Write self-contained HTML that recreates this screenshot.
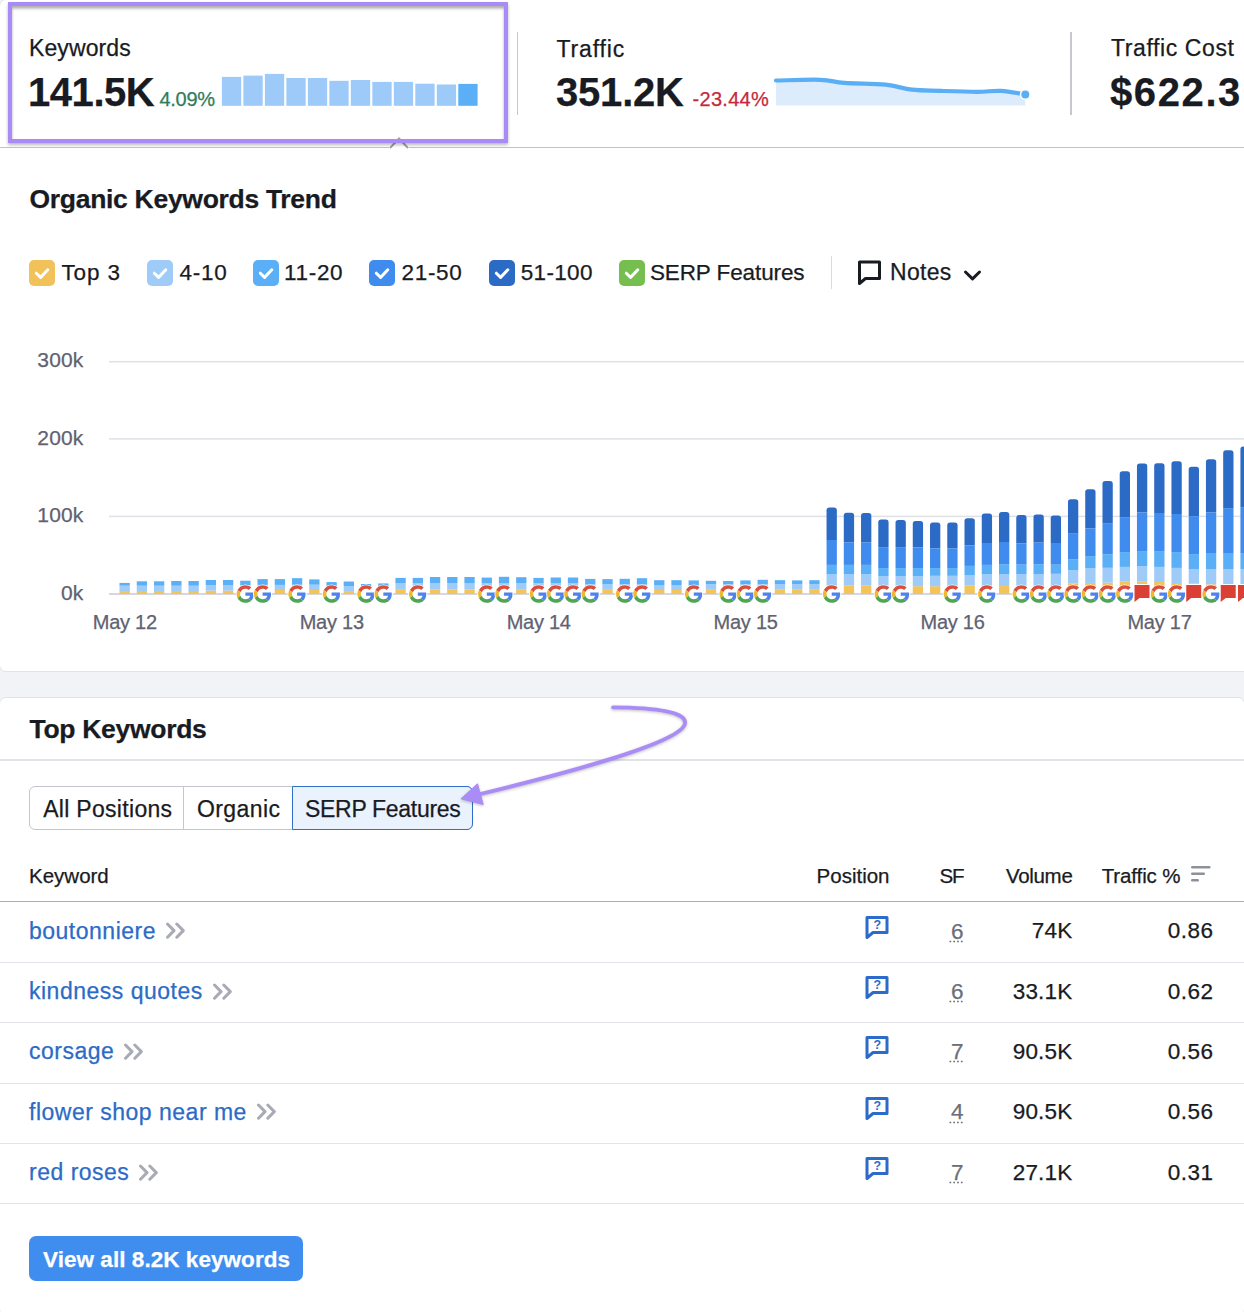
<!DOCTYPE html>
<html><head><meta charset="utf-8"><title>Organic Research</title>
<style>
html,body{margin:0;padding:0;background:#f2f3f7;width:1244px;height:1312px;overflow:hidden;position:relative;font-family:"Liberation Sans", sans-serif}
.t{position:absolute;white-space:nowrap;-webkit-text-stroke:0.25px currentColor}
.abs{position:absolute}
.frame{border:4px solid #a88bf6;box-shadow:0 2px 3px rgba(0,0,0,0.28), inset 0 2.5px 3px rgba(0,0,0,0.32)}
.cb{width:26px;height:26px;border-radius:5px}
.cb svg{display:block}
.band{left:0;top:671px;width:1244px;height:26px;background:#f2f3f7}
.card1{left:-1px;top:-1px;width:1300px;height:673px;box-sizing:border-box;border:1px solid #e2e3e9;border-radius:7px;background:#fff}
.card2{left:-1px;top:696.5px;width:1246px;height:619px;box-sizing:border-box;border:1px solid #e2e3e9;border-radius:7px;background:#fff}
.seg{box-sizing:border-box;border:1.3px solid #c4c6cf;border-radius:6px;background:#fff}
.btn{background:#3f8def;border-radius:7px}
</style></head><body>
<div class="abs card1"></div>
<div class="abs card2"></div>
<div class="kpi">
<div class="t" style="left:29px;top:37.25px;font-size:23px;line-height:23px;color:#191b23;font-weight:400;letter-spacing:0.1px;">Keywords</div>
<div class="t" style="left:28px;top:71.80px;font-size:40px;line-height:40px;color:#191b23;font-weight:700;letter-spacing:-0.45px;">141.5K</div>
<div class="t" style="left:159.5px;top:89.10px;font-size:20px;line-height:20px;color:#307d5b;font-weight:400;letter-spacing:-0.3px;">4.09%</div>
<svg class="abs" style="left:0;top:0" width="520" height="150"><rect x="221.90" y="76.9" width="19.3" height="28.90" fill="#9dcaf8"/><rect x="243.39" y="75.6" width="19.3" height="30.20" fill="#9dcaf8"/><rect x="264.88" y="73.9" width="19.3" height="31.90" fill="#9dcaf8"/><rect x="286.37" y="78" width="19.3" height="27.80" fill="#9dcaf8"/><rect x="307.86" y="78" width="19.3" height="27.80" fill="#9dcaf8"/><rect x="329.35" y="80.8" width="19.3" height="25.00" fill="#9dcaf8"/><rect x="350.84" y="80" width="19.3" height="25.80" fill="#9dcaf8"/><rect x="372.33" y="81.9" width="19.3" height="23.90" fill="#9dcaf8"/><rect x="393.82" y="81.9" width="19.3" height="23.90" fill="#9dcaf8"/><rect x="415.31" y="83.7" width="19.3" height="22.10" fill="#9dcaf8"/><rect x="436.80" y="84.5" width="19.3" height="21.30" fill="#9dcaf8"/><rect x="458.29" y="83.9" width="19.3" height="21.90" fill="#5aaff6"/></svg>
<div class="abs" style="left:516.5px;top:32px;width:1.5px;height:83px;background:#c6c8d1"></div>
<div class="t" style="left:556.5px;top:37.55px;font-size:23px;line-height:23px;color:#191b23;font-weight:400;letter-spacing:0.85px;">Traffic</div>
<div class="t" style="left:556px;top:71.80px;font-size:40px;line-height:40px;color:#191b23;font-weight:700;letter-spacing:-0.2px;">351.2K</div>
<div class="t" style="left:692.5px;top:89.00px;font-size:20px;line-height:20px;color:#c7283a;font-weight:400;letter-spacing:0.3px;">-23.44%</div>
<svg class="abs" style="left:0;top:0" width="1244" height="150"><path d="M776,80.5 C784.0,80.4 808.0,79.4 820.3,79.8 C832.6,80.2 832.7,82.0 844.4,82.9 C856.1,83.8 873.2,83.4 885.4,84.6 C897.5,85.8 901.9,88.6 911.9,89.7 C921.9,90.8 929.2,90.5 940.9,90.9 C952.6,91.3 966.2,91.8 977,91.8 C987.8,91.8 992.4,90.4 1001.1,90.9 C1009.8,91.4 1020.9,93.9 1025.3,94.5 L1025.3,105.6 L776,105.6 Z" fill="#dcecfc"/><path d="M776,80.5 C784.0,80.4 808.0,79.4 820.3,79.8 C832.6,80.2 832.7,82.0 844.4,82.9 C856.1,83.8 873.2,83.4 885.4,84.6 C897.5,85.8 901.9,88.6 911.9,89.7 C921.9,90.8 929.2,90.5 940.9,90.9 C952.6,91.3 966.2,91.8 977,91.8 C987.8,91.8 992.4,90.4 1001.1,90.9 C1009.8,91.4 1020.9,93.9 1025.3,94.5" fill="none" stroke="#5aaef6" stroke-width="4.2" stroke-linejoin="round" stroke-linecap="round"/><circle cx="1025.3" cy="94.5" r="5.5" fill="#fff"/><circle cx="1025.3" cy="94.5" r="4" fill="#5aaef6"/></svg>
<div class="abs" style="left:1070px;top:32px;width:1.5px;height:83px;background:#c6c8d1"></div>
<div class="t" style="left:1111px;top:37.05px;font-size:23px;line-height:23px;color:#191b23;font-weight:400;letter-spacing:0.6px;">Traffic Cost</div>
<div class="t" style="left:1110px;top:71.80px;font-size:40px;line-height:40px;color:#191b23;font-weight:700;letter-spacing:1.6px;">$622.3</div>
<div class="abs" style="left:0;top:146.8px;width:389px;height:1.3px;background:#c0c2cc"></div>
<div class="abs" style="left:409px;top:146.8px;width:835px;height:1.3px;background:#c0c2cc"></div>
<svg class="abs" style="left:385px;top:132px" width="30" height="20"><path d="M5,16 L14,6.5 L23,16" fill="#fff" stroke="#9fa1ab" stroke-width="1.9"/></svg>
<div class="abs frame" style="left:8px;top:2px;width:492px;height:133px;"></div>
</div>
<div class="t" style="left:29.5px;top:186.28px;font-size:26.5px;line-height:26.5px;color:#191b23;font-weight:700;letter-spacing:-0.3px;">Organic Keywords Trend</div>
<div class="abs cb" style="left:29px;top:260px;background:#f2c25a"><svg width="26" height="26"><path d="M7.3,13.2 L11.6,17.4 L18.8,9.8" fill="none" stroke="#fff" stroke-width="3" stroke-linecap="round" stroke-linejoin="round"/></svg></div>
<div class="t" style="left:61.5px;top:261.98px;font-size:22.5px;line-height:22.5px;color:#191b23;font-weight:400;letter-spacing:0.85px;">Top 3</div>
<div class="abs cb" style="left:147px;top:260px;background:#9ecbf8"><svg width="26" height="26"><path d="M7.3,13.2 L11.6,17.4 L18.8,9.8" fill="none" stroke="#fff" stroke-width="3" stroke-linecap="round" stroke-linejoin="round"/></svg></div>
<div class="t" style="left:179.5px;top:261.98px;font-size:22.5px;line-height:22.5px;color:#191b23;font-weight:400;letter-spacing:0.77px;">4-10</div>
<div class="abs cb" style="left:253px;top:260px;background:#5aaff6"><svg width="26" height="26"><path d="M7.3,13.2 L11.6,17.4 L18.8,9.8" fill="none" stroke="#fff" stroke-width="3" stroke-linecap="round" stroke-linejoin="round"/></svg></div>
<div class="t" style="left:284.1px;top:261.98px;font-size:22.5px;line-height:22.5px;color:#191b23;font-weight:400;letter-spacing:0.66px;">11-20</div>
<div class="abs cb" style="left:369px;top:260px;background:#3f8cee"><svg width="26" height="26"><path d="M7.3,13.2 L11.6,17.4 L18.8,9.8" fill="none" stroke="#fff" stroke-width="3" stroke-linecap="round" stroke-linejoin="round"/></svg></div>
<div class="t" style="left:401.5px;top:261.98px;font-size:22.5px;line-height:22.5px;color:#191b23;font-weight:400;letter-spacing:0.68px;">21-50</div>
<div class="abs cb" style="left:489px;top:260px;background:#2c6bc5"><svg width="26" height="26"><path d="M7.3,13.2 L11.6,17.4 L18.8,9.8" fill="none" stroke="#fff" stroke-width="3" stroke-linecap="round" stroke-linejoin="round"/></svg></div>
<div class="t" style="left:520.7px;top:261.98px;font-size:22.5px;line-height:22.5px;color:#191b23;font-weight:400;letter-spacing:0.35px;">51-100</div>
<div class="abs cb" style="left:619px;top:260px;background:#76be4f"><svg width="26" height="26"><path d="M7.3,13.2 L11.6,17.4 L18.8,9.8" fill="none" stroke="#fff" stroke-width="3" stroke-linecap="round" stroke-linejoin="round"/></svg></div>
<div class="t" style="left:649.9px;top:261.98px;font-size:22.5px;line-height:22.5px;color:#191b23;font-weight:400;letter-spacing:-0.1px;">SERP Features</div>
<div class="abs" style="left:831px;top:256px;width:1.3px;height:33px;background:#d9dae2"></div>
<svg class="abs" style="left:855px;top:258px" width="30" height="30"><path d="M4.5,4 H24.5 V20.5 H10.5 L4.5,25.5 Z" fill="none" stroke="#191b23" stroke-width="3" stroke-linejoin="round"/></svg>
<div class="t" style="left:890px;top:260.85px;font-size:23px;line-height:23px;color:#191b23;font-weight:400;letter-spacing:0.3px;">Notes</div>
<svg class="abs" style="left:960.5px;top:265.6px" width="24" height="20"><path d="M4.5,6 L11.5,12.8 L18.5,6" fill="none" stroke="#191b23" stroke-width="3" stroke-linecap="round" stroke-linejoin="round"/></svg>
<svg class="abs" style="left:0;top:0" width="1244" height="680"><defs><clipPath id="cc"><rect x="0" y="0" width="1244" height="680"/></clipPath></defs><rect x="109" y="360.95" width="1135" height="1.5" fill="#e0e1e7"/><rect x="109" y="438.15" width="1135" height="1.5" fill="#e0e1e7"/><rect x="109" y="515.65" width="1135" height="1.5" fill="#e0e1e7"/><rect x="109" y="593" width="1135" height="2" fill="#d7d8df"/><rect x="119.50" y="591.00" width="10.3" height="3.00" fill="#f2c45a"/><rect x="119.50" y="585.70" width="10.3" height="5.30" fill="#9ecbf8"/><rect x="119.50" y="582.90" width="10.3" height="2.80" fill="#5aaff6"/><rect x="136.75" y="591.00" width="10.3" height="3.00" fill="#f2c45a"/><rect x="136.75" y="585.70" width="10.3" height="5.30" fill="#9ecbf8"/><rect x="136.75" y="581.30" width="10.3" height="4.40" fill="#5aaff6"/><rect x="153.99" y="591.00" width="10.3" height="3.00" fill="#f2c45a"/><rect x="153.99" y="585.70" width="10.3" height="5.30" fill="#9ecbf8"/><rect x="153.99" y="581.30" width="10.3" height="4.40" fill="#5aaff6"/><rect x="171.24" y="591.00" width="10.3" height="3.00" fill="#f2c45a"/><rect x="171.24" y="585.70" width="10.3" height="5.30" fill="#9ecbf8"/><rect x="171.24" y="581.00" width="10.3" height="4.70" fill="#5aaff6"/><rect x="188.48" y="591.00" width="10.3" height="3.00" fill="#f2c45a"/><rect x="188.48" y="585.70" width="10.3" height="5.30" fill="#9ecbf8"/><rect x="188.48" y="581.00" width="10.3" height="4.70" fill="#5aaff6"/><rect x="205.73" y="590.60" width="10.3" height="3.40" fill="#f2c45a"/><rect x="205.73" y="585.20" width="10.3" height="5.40" fill="#9ecbf8"/><rect x="205.73" y="580.00" width="10.3" height="5.20" fill="#5aaff6"/><rect x="222.97" y="590.60" width="10.3" height="3.40" fill="#f2c45a"/><rect x="222.97" y="585.20" width="10.3" height="5.40" fill="#9ecbf8"/><rect x="222.97" y="580.00" width="10.3" height="5.20" fill="#5aaff6"/><rect x="240.22" y="590.60" width="10.3" height="3.40" fill="#f2c45a"/><rect x="240.22" y="585.20" width="10.3" height="5.40" fill="#9ecbf8"/><rect x="240.22" y="580.70" width="10.3" height="4.50" fill="#5aaff6"/><rect x="257.46" y="590.00" width="10.3" height="4.00" fill="#f2c45a"/><rect x="257.46" y="584.90" width="10.3" height="5.10" fill="#9ecbf8"/><rect x="257.46" y="579.10" width="10.3" height="5.80" fill="#5aaff6"/><rect x="274.71" y="590.00" width="10.3" height="4.00" fill="#f2c45a"/><rect x="274.71" y="584.90" width="10.3" height="5.10" fill="#9ecbf8"/><rect x="274.71" y="579.10" width="10.3" height="5.80" fill="#5aaff6"/><rect x="291.95" y="590.00" width="10.3" height="4.00" fill="#f2c45a"/><rect x="291.95" y="584.70" width="10.3" height="5.30" fill="#9ecbf8"/><rect x="291.95" y="578.20" width="10.3" height="6.50" fill="#5aaff6"/><rect x="309.20" y="590.00" width="10.3" height="4.00" fill="#f2c45a"/><rect x="309.20" y="584.70" width="10.3" height="5.30" fill="#9ecbf8"/><rect x="309.20" y="579.40" width="10.3" height="5.30" fill="#5aaff6"/><rect x="326.44" y="591.10" width="10.3" height="2.90" fill="#f2c45a"/><rect x="326.44" y="586.00" width="10.3" height="5.10" fill="#9ecbf8"/><rect x="326.44" y="582.10" width="10.3" height="3.90" fill="#5aaff6"/><rect x="343.69" y="591.10" width="10.3" height="2.90" fill="#f2c45a"/><rect x="343.69" y="586.00" width="10.3" height="5.10" fill="#9ecbf8"/><rect x="343.69" y="581.50" width="10.3" height="4.50" fill="#5aaff6"/><rect x="360.93" y="591.10" width="10.3" height="2.90" fill="#f2c45a"/><rect x="360.93" y="586.50" width="10.3" height="4.60" fill="#9ecbf8"/><rect x="360.93" y="584.00" width="10.3" height="2.50" fill="#5aaff6"/><rect x="378.18" y="591.10" width="10.3" height="2.90" fill="#f2c45a"/><rect x="378.18" y="586.50" width="10.3" height="4.60" fill="#9ecbf8"/><rect x="378.18" y="583.40" width="10.3" height="3.10" fill="#5aaff6"/><rect x="395.42" y="589.80" width="10.3" height="4.20" fill="#f2c45a"/><rect x="395.42" y="583.00" width="10.3" height="6.80" fill="#9ecbf8"/><rect x="395.42" y="577.90" width="10.3" height="5.10" fill="#5aaff6"/><rect x="412.67" y="589.80" width="10.3" height="4.20" fill="#f2c45a"/><rect x="412.67" y="583.00" width="10.3" height="6.80" fill="#9ecbf8"/><rect x="412.67" y="577.90" width="10.3" height="5.10" fill="#5aaff6"/><rect x="429.91" y="589.40" width="10.3" height="4.60" fill="#f2c45a"/><rect x="429.91" y="583.00" width="10.3" height="6.40" fill="#9ecbf8"/><rect x="429.91" y="577.00" width="10.3" height="6.00" fill="#5aaff6"/><rect x="447.16" y="589.40" width="10.3" height="4.60" fill="#f2c45a"/><rect x="447.16" y="583.00" width="10.3" height="6.40" fill="#9ecbf8"/><rect x="447.16" y="577.00" width="10.3" height="6.00" fill="#5aaff6"/><rect x="464.40" y="589.40" width="10.3" height="4.60" fill="#f2c45a"/><rect x="464.40" y="583.00" width="10.3" height="6.40" fill="#9ecbf8"/><rect x="464.40" y="577.00" width="10.3" height="6.00" fill="#5aaff6"/><rect x="481.65" y="589.40" width="10.3" height="4.60" fill="#f2c45a"/><rect x="481.65" y="583.00" width="10.3" height="6.40" fill="#9ecbf8"/><rect x="481.65" y="577.60" width="10.3" height="5.40" fill="#5aaff6"/><rect x="498.89" y="589.40" width="10.3" height="4.60" fill="#f2c45a"/><rect x="498.89" y="583.00" width="10.3" height="6.40" fill="#9ecbf8"/><rect x="498.89" y="576.80" width="10.3" height="6.20" fill="#5aaff6"/><rect x="516.13" y="589.20" width="10.3" height="4.80" fill="#f2c45a"/><rect x="516.13" y="583.00" width="10.3" height="6.20" fill="#9ecbf8"/><rect x="516.13" y="577.20" width="10.3" height="5.80" fill="#5aaff6"/><rect x="533.38" y="589.40" width="10.3" height="4.60" fill="#f2c45a"/><rect x="533.38" y="583.00" width="10.3" height="6.40" fill="#9ecbf8"/><rect x="533.38" y="577.90" width="10.3" height="5.10" fill="#5aaff6"/><rect x="550.62" y="589.40" width="10.3" height="4.60" fill="#f2c45a"/><rect x="550.62" y="583.00" width="10.3" height="6.40" fill="#9ecbf8"/><rect x="550.62" y="577.50" width="10.3" height="5.50" fill="#5aaff6"/><rect x="567.87" y="589.40" width="10.3" height="4.60" fill="#f2c45a"/><rect x="567.87" y="583.00" width="10.3" height="6.40" fill="#9ecbf8"/><rect x="567.87" y="577.50" width="10.3" height="5.50" fill="#5aaff6"/><rect x="585.12" y="589.80" width="10.3" height="4.20" fill="#f2c45a"/><rect x="585.12" y="584.30" width="10.3" height="5.50" fill="#9ecbf8"/><rect x="585.12" y="578.90" width="10.3" height="5.40" fill="#5aaff6"/><rect x="602.36" y="589.80" width="10.3" height="4.20" fill="#f2c45a"/><rect x="602.36" y="584.30" width="10.3" height="5.50" fill="#9ecbf8"/><rect x="602.36" y="579.10" width="10.3" height="5.20" fill="#5aaff6"/><rect x="619.61" y="589.80" width="10.3" height="4.20" fill="#f2c45a"/><rect x="619.61" y="584.30" width="10.3" height="5.50" fill="#9ecbf8"/><rect x="619.61" y="578.80" width="10.3" height="5.50" fill="#5aaff6"/><rect x="636.85" y="589.80" width="10.3" height="4.20" fill="#f2c45a"/><rect x="636.85" y="584.30" width="10.3" height="5.50" fill="#9ecbf8"/><rect x="636.85" y="578.20" width="10.3" height="6.10" fill="#5aaff6"/><rect x="654.10" y="590.00" width="10.3" height="4.00" fill="#f2c45a"/><rect x="654.10" y="585.00" width="10.3" height="5.00" fill="#9ecbf8"/><rect x="654.10" y="580.20" width="10.3" height="4.80" fill="#5aaff6"/><rect x="671.34" y="590.00" width="10.3" height="4.00" fill="#f2c45a"/><rect x="671.34" y="585.00" width="10.3" height="5.00" fill="#9ecbf8"/><rect x="671.34" y="580.20" width="10.3" height="4.80" fill="#5aaff6"/><rect x="688.59" y="590.00" width="10.3" height="4.00" fill="#f2c45a"/><rect x="688.59" y="585.00" width="10.3" height="5.00" fill="#9ecbf8"/><rect x="688.59" y="580.40" width="10.3" height="4.60" fill="#5aaff6"/><rect x="705.83" y="589.80" width="10.3" height="4.20" fill="#f2c45a"/><rect x="705.83" y="584.30" width="10.3" height="5.50" fill="#9ecbf8"/><rect x="705.83" y="580.80" width="10.3" height="3.50" fill="#5aaff6"/><rect x="723.08" y="589.80" width="10.3" height="4.20" fill="#f2c45a"/><rect x="723.08" y="584.30" width="10.3" height="5.50" fill="#9ecbf8"/><rect x="723.08" y="581.00" width="10.3" height="3.30" fill="#5aaff6"/><rect x="740.32" y="589.80" width="10.3" height="4.20" fill="#f2c45a"/><rect x="740.32" y="584.30" width="10.3" height="5.50" fill="#9ecbf8"/><rect x="740.32" y="580.40" width="10.3" height="3.90" fill="#5aaff6"/><rect x="757.57" y="589.20" width="10.3" height="4.80" fill="#f2c45a"/><rect x="757.57" y="584.00" width="10.3" height="5.20" fill="#9ecbf8"/><rect x="757.57" y="579.80" width="10.3" height="4.20" fill="#5aaff6"/><rect x="774.81" y="589.20" width="10.3" height="4.80" fill="#f2c45a"/><rect x="774.81" y="584.00" width="10.3" height="5.20" fill="#9ecbf8"/><rect x="774.81" y="580.20" width="10.3" height="3.80" fill="#5aaff6"/><rect x="792.06" y="589.20" width="10.3" height="4.80" fill="#f2c45a"/><rect x="792.06" y="584.00" width="10.3" height="5.20" fill="#9ecbf8"/><rect x="792.06" y="580.40" width="10.3" height="3.60" fill="#5aaff6"/><rect x="809.30" y="589.20" width="10.3" height="4.80" fill="#f2c45a"/><rect x="809.30" y="584.00" width="10.3" height="5.20" fill="#9ecbf8"/><rect x="809.30" y="580.20" width="10.3" height="3.80" fill="#5aaff6"/><rect x="826.55" y="585.20" width="10.3" height="8.80" fill="#f2c45a"/><rect x="826.55" y="574.10" width="10.3" height="11.10" fill="#9ecbf8"/><rect x="826.55" y="564.90" width="10.3" height="9.20" fill="#5aaff6"/><rect x="826.55" y="540.00" width="10.3" height="24.90" fill="#3f8cee"/><path d="M826.55,540.00 V510.30 A2.8,2.8 0 0 1 829.35,507.50 H834.05 A2.8,2.8 0 0 1 836.85,510.30 V540.00 Z" fill="#2c6bc5"/><rect x="843.79" y="585.40" width="10.3" height="8.60" fill="#f2c45a"/><rect x="843.79" y="574.30" width="10.3" height="11.10" fill="#9ecbf8"/><rect x="843.79" y="564.90" width="10.3" height="9.40" fill="#5aaff6"/><rect x="843.79" y="542.30" width="10.3" height="22.60" fill="#3f8cee"/><path d="M843.79,542.30 V515.50 A2.8,2.8 0 0 1 846.59,512.70 H851.29 A2.8,2.8 0 0 1 854.09,515.50 V542.30 Z" fill="#2c6bc5"/><rect x="861.04" y="585.40" width="10.3" height="8.60" fill="#f2c45a"/><rect x="861.04" y="574.30" width="10.3" height="11.10" fill="#9ecbf8"/><rect x="861.04" y="564.90" width="10.3" height="9.40" fill="#5aaff6"/><rect x="861.04" y="542.30" width="10.3" height="22.60" fill="#3f8cee"/><path d="M861.04,542.30 V515.80 A2.8,2.8 0 0 1 863.84,513.00 H868.54 A2.8,2.8 0 0 1 871.34,515.80 V542.30 Z" fill="#2c6bc5"/><rect x="878.28" y="585.70" width="10.3" height="8.30" fill="#f2c45a"/><rect x="878.28" y="576.00" width="10.3" height="9.70" fill="#9ecbf8"/><rect x="878.28" y="568.10" width="10.3" height="7.90" fill="#5aaff6"/><rect x="878.28" y="547.10" width="10.3" height="21.00" fill="#3f8cee"/><path d="M878.28,547.10 V522.40 A2.8,2.8 0 0 1 881.08,519.60 H885.78 A2.8,2.8 0 0 1 888.58,522.40 V547.10 Z" fill="#2c6bc5"/><rect x="895.53" y="585.70" width="10.3" height="8.30" fill="#f2c45a"/><rect x="895.53" y="576.00" width="10.3" height="9.70" fill="#9ecbf8"/><rect x="895.53" y="568.10" width="10.3" height="7.90" fill="#5aaff6"/><rect x="895.53" y="547.10" width="10.3" height="21.00" fill="#3f8cee"/><path d="M895.53,547.10 V522.70 A2.8,2.8 0 0 1 898.33,519.90 H903.03 A2.8,2.8 0 0 1 905.83,522.70 V547.10 Z" fill="#2c6bc5"/><rect x="912.77" y="586.20" width="10.3" height="7.80" fill="#f2c45a"/><rect x="912.77" y="576.00" width="10.3" height="10.20" fill="#9ecbf8"/><rect x="912.77" y="568.10" width="10.3" height="7.90" fill="#5aaff6"/><rect x="912.77" y="547.60" width="10.3" height="20.50" fill="#3f8cee"/><path d="M912.77,547.60 V523.80 A2.8,2.8 0 0 1 915.57,521.00 H920.27 A2.8,2.8 0 0 1 923.07,523.80 V547.60 Z" fill="#2c6bc5"/><rect x="930.02" y="586.20" width="10.3" height="7.80" fill="#f2c45a"/><rect x="930.02" y="575.80" width="10.3" height="10.40" fill="#9ecbf8"/><rect x="930.02" y="568.10" width="10.3" height="7.70" fill="#5aaff6"/><rect x="930.02" y="548.30" width="10.3" height="19.80" fill="#3f8cee"/><path d="M930.02,548.30 V525.30 A2.8,2.8 0 0 1 932.82,522.50 H937.52 A2.8,2.8 0 0 1 940.32,525.30 V548.30 Z" fill="#2c6bc5"/><rect x="947.26" y="586.20" width="10.3" height="7.80" fill="#f2c45a"/><rect x="947.26" y="575.80" width="10.3" height="10.40" fill="#9ecbf8"/><rect x="947.26" y="568.10" width="10.3" height="7.70" fill="#5aaff6"/><rect x="947.26" y="548.30" width="10.3" height="19.80" fill="#3f8cee"/><path d="M947.26,548.30 V525.30 A2.8,2.8 0 0 1 950.06,522.50 H954.76 A2.8,2.8 0 0 1 957.56,525.30 V548.30 Z" fill="#2c6bc5"/><rect x="964.50" y="585.50" width="10.3" height="8.50" fill="#f2c45a"/><rect x="964.50" y="575.00" width="10.3" height="10.50" fill="#9ecbf8"/><rect x="964.50" y="565.90" width="10.3" height="9.10" fill="#5aaff6"/><rect x="964.50" y="545.30" width="10.3" height="20.60" fill="#3f8cee"/><path d="M964.50,545.30 V521.10 A2.8,2.8 0 0 1 967.30,518.30 H972.00 A2.8,2.8 0 0 1 974.80,521.10 V545.30 Z" fill="#2c6bc5"/><rect x="981.75" y="585.20" width="10.3" height="8.80" fill="#f2c45a"/><rect x="981.75" y="574.00" width="10.3" height="11.20" fill="#9ecbf8"/><rect x="981.75" y="564.90" width="10.3" height="9.10" fill="#5aaff6"/><rect x="981.75" y="543.00" width="10.3" height="21.90" fill="#3f8cee"/><path d="M981.75,543.00 V516.40 A2.8,2.8 0 0 1 984.55,513.60 H989.25 A2.8,2.8 0 0 1 992.05,516.40 V543.00 Z" fill="#2c6bc5"/><rect x="999.00" y="585.00" width="10.3" height="9.00" fill="#f2c45a"/><rect x="999.00" y="574.00" width="10.3" height="11.00" fill="#9ecbf8"/><rect x="999.00" y="564.20" width="10.3" height="9.80" fill="#5aaff6"/><rect x="999.00" y="542.00" width="10.3" height="22.20" fill="#3f8cee"/><path d="M999.00,542.00 V514.90 A2.8,2.8 0 0 1 1001.79,512.10 H1006.50 A2.8,2.8 0 0 1 1009.29,514.90 V542.00 Z" fill="#2c6bc5"/><rect x="1016.24" y="585.00" width="10.3" height="9.00" fill="#f2c45a"/><rect x="1016.24" y="574.00" width="10.3" height="11.00" fill="#9ecbf8"/><rect x="1016.24" y="564.60" width="10.3" height="9.40" fill="#5aaff6"/><rect x="1016.24" y="543.30" width="10.3" height="21.30" fill="#3f8cee"/><path d="M1016.24,543.30 V517.90 A2.8,2.8 0 0 1 1019.04,515.10 H1023.74 A2.8,2.8 0 0 1 1026.54,517.90 V543.30 Z" fill="#2c6bc5"/><rect x="1033.49" y="585.00" width="10.3" height="9.00" fill="#f2c45a"/><rect x="1033.49" y="574.00" width="10.3" height="11.00" fill="#9ecbf8"/><rect x="1033.49" y="564.20" width="10.3" height="9.80" fill="#5aaff6"/><rect x="1033.49" y="542.50" width="10.3" height="21.70" fill="#3f8cee"/><path d="M1033.49,542.50 V517.40 A2.8,2.8 0 0 1 1036.29,514.60 H1040.99 A2.8,2.8 0 0 1 1043.79,517.40 V542.50 Z" fill="#2c6bc5"/><rect x="1050.73" y="585.00" width="10.3" height="9.00" fill="#f2c45a"/><rect x="1050.73" y="573.80" width="10.3" height="11.20" fill="#9ecbf8"/><rect x="1050.73" y="564.70" width="10.3" height="9.10" fill="#5aaff6"/><rect x="1050.73" y="542.90" width="10.3" height="21.80" fill="#3f8cee"/><path d="M1050.73,542.90 V518.20 A2.8,2.8 0 0 1 1053.53,515.40 H1058.23 A2.8,2.8 0 0 1 1061.03,518.20 V542.90 Z" fill="#2c6bc5"/><rect x="1067.97" y="583.60" width="10.3" height="10.40" fill="#f2c45a"/><rect x="1067.97" y="570.30" width="10.3" height="13.30" fill="#9ecbf8"/><rect x="1067.97" y="559.20" width="10.3" height="11.10" fill="#5aaff6"/><rect x="1067.97" y="533.20" width="10.3" height="26.00" fill="#3f8cee"/><path d="M1067.97,533.20 V502.00 A2.8,2.8 0 0 1 1070.77,499.20 H1075.47 A2.8,2.8 0 0 1 1078.27,502.00 V533.20 Z" fill="#2c6bc5"/><rect x="1085.22" y="582.90" width="10.3" height="11.10" fill="#f2c45a"/><rect x="1085.22" y="568.10" width="10.3" height="14.80" fill="#9ecbf8"/><rect x="1085.22" y="556.10" width="10.3" height="12.00" fill="#5aaff6"/><rect x="1085.22" y="528.30" width="10.3" height="27.80" fill="#3f8cee"/><path d="M1085.22,528.30 V492.00 A2.8,2.8 0 0 1 1088.02,489.20 H1092.72 A2.8,2.8 0 0 1 1095.52,492.00 V528.30 Z" fill="#2c6bc5"/><rect x="1102.47" y="582.60" width="10.3" height="11.40" fill="#f2c45a"/><rect x="1102.47" y="567.80" width="10.3" height="14.80" fill="#9ecbf8"/><rect x="1102.47" y="554.30" width="10.3" height="13.50" fill="#5aaff6"/><rect x="1102.47" y="523.20" width="10.3" height="31.10" fill="#3f8cee"/><path d="M1102.47,523.20 V483.90 A2.8,2.8 0 0 1 1105.27,481.10 H1109.97 A2.8,2.8 0 0 1 1112.77,483.90 V523.20 Z" fill="#2c6bc5"/><rect x="1119.71" y="581.70" width="10.3" height="12.30" fill="#f2c45a"/><rect x="1119.71" y="566.90" width="10.3" height="14.80" fill="#9ecbf8"/><rect x="1119.71" y="552.10" width="10.3" height="14.80" fill="#5aaff6"/><rect x="1119.71" y="517.20" width="10.3" height="34.90" fill="#3f8cee"/><path d="M1119.71,517.20 V474.00 A2.8,2.8 0 0 1 1122.51,471.20 H1127.21 A2.8,2.8 0 0 1 1130.01,474.00 V517.20 Z" fill="#2c6bc5"/><rect x="1136.95" y="581.50" width="10.3" height="12.50" fill="#f2c45a"/><rect x="1136.95" y="566.30" width="10.3" height="15.20" fill="#9ecbf8"/><rect x="1136.95" y="551.10" width="10.3" height="15.20" fill="#5aaff6"/><rect x="1136.95" y="512.30" width="10.3" height="38.80" fill="#3f8cee"/><path d="M1136.95,512.30 V466.20 A2.8,2.8 0 0 1 1139.75,463.40 H1144.45 A2.8,2.8 0 0 1 1147.25,466.20 V512.30 Z" fill="#2c6bc5"/><rect x="1154.20" y="582.00" width="10.3" height="12.00" fill="#f2c45a"/><rect x="1154.20" y="566.90" width="10.3" height="15.10" fill="#9ecbf8"/><rect x="1154.20" y="551.10" width="10.3" height="15.80" fill="#5aaff6"/><rect x="1154.20" y="513.00" width="10.3" height="38.10" fill="#3f8cee"/><path d="M1154.20,513.00 V466.10 A2.8,2.8 0 0 1 1157.00,463.30 H1161.70 A2.8,2.8 0 0 1 1164.50,466.10 V513.00 Z" fill="#2c6bc5"/><rect x="1171.45" y="583.00" width="10.3" height="11.00" fill="#f2c45a"/><rect x="1171.45" y="567.90" width="10.3" height="15.10" fill="#9ecbf8"/><rect x="1171.45" y="552.10" width="10.3" height="15.80" fill="#5aaff6"/><rect x="1171.45" y="514.00" width="10.3" height="38.10" fill="#3f8cee"/><path d="M1171.45,514.00 V464.10 A2.8,2.8 0 0 1 1174.25,461.30 H1178.95 A2.8,2.8 0 0 1 1181.75,464.10 V514.00 Z" fill="#2c6bc5"/><rect x="1188.69" y="583.60" width="10.3" height="10.40" fill="#f2c45a"/><rect x="1188.69" y="569.00" width="10.3" height="14.60" fill="#9ecbf8"/><rect x="1188.69" y="554.10" width="10.3" height="14.90" fill="#5aaff6"/><rect x="1188.69" y="516.10" width="10.3" height="38.00" fill="#3f8cee"/><path d="M1188.69,516.10 V469.60 A2.8,2.8 0 0 1 1191.49,466.80 H1196.19 A2.8,2.8 0 0 1 1198.99,469.60 V516.10 Z" fill="#2c6bc5"/><rect x="1205.94" y="584.30" width="10.3" height="9.70" fill="#f2c45a"/><rect x="1205.94" y="569.00" width="10.3" height="15.30" fill="#9ecbf8"/><rect x="1205.94" y="553.00" width="10.3" height="16.00" fill="#5aaff6"/><rect x="1205.94" y="512.30" width="10.3" height="40.70" fill="#3f8cee"/><path d="M1205.94,512.30 V462.00 A2.8,2.8 0 0 1 1208.74,459.20 H1213.44 A2.8,2.8 0 0 1 1216.24,462.00 V512.30 Z" fill="#2c6bc5"/><rect x="1223.18" y="584.30" width="10.3" height="9.70" fill="#f2c45a"/><rect x="1223.18" y="569.00" width="10.3" height="15.30" fill="#9ecbf8"/><rect x="1223.18" y="553.00" width="10.3" height="16.00" fill="#5aaff6"/><rect x="1223.18" y="508.20" width="10.3" height="44.80" fill="#3f8cee"/><path d="M1223.18,508.20 V453.00 A2.8,2.8 0 0 1 1225.98,450.20 H1230.68 A2.8,2.8 0 0 1 1233.48,453.00 V508.20 Z" fill="#2c6bc5"/><rect x="1240.42" y="584.30" width="10.3" height="9.70" fill="#f2c45a"/><rect x="1240.42" y="569.00" width="10.3" height="15.30" fill="#9ecbf8"/><rect x="1240.42" y="553.00" width="10.3" height="16.00" fill="#5aaff6"/><rect x="1240.42" y="507.20" width="10.3" height="45.80" fill="#3f8cee"/><path d="M1240.42,507.20 V449.30 A2.8,2.8 0 0 1 1243.22,446.50 H1247.92 A2.8,2.8 0 0 1 1250.72,449.30 V507.20 Z" fill="#2c6bc5"/><circle cx="245.37" cy="594" r="9.6" fill="#fff"/><g transform="translate(236.56,585.2) scale(0.367)"><path fill="#d94f3d" d="M24 9.5c3.54 0 6.71 1.22 9.21 3.6l6.85-6.85C35.9 2.38 30.47 0 24 0 14.62 0 6.51 5.38 2.56 13.22l7.98 6.19C12.43 13.72 17.74 9.5 24 9.5z"/><path fill="#4e82ec" d="M46.98 24.55c0-1.57-.15-3.09-.38-4.55H24v9.02h12.94c-.58 2.960-2.26 5.480-4.780 7.180l7.73 6c4.510-4.180 7.090-10.360 7.090-17.650z"/><path fill="#f1b82d" d="M10.53 28.59c-.48-1.45-.76-2.99-.76-4.59s.27-3.14.76-4.59l-7.98-6.19C.92 16.46 0 20.120 0 24c0 3.880.92 7.540 2.560 10.780l7.970-6.190z"/><path fill="#4fa553" d="M24 48c6.48 0 11.93-2.13 15.89-5.81l-7.73-6c-2.15 1.45-4.92 2.3-8.16 2.3-6.26 0-11.57-4.22-13.47-9.91l-7.98 6.19C6.51 42.62 14.62 48 24 48z"/></g><circle cx="262.61" cy="594" r="9.6" fill="#fff"/><g transform="translate(253.81,585.2) scale(0.367)"><path fill="#d94f3d" d="M24 9.5c3.54 0 6.71 1.22 9.21 3.6l6.85-6.85C35.9 2.38 30.47 0 24 0 14.62 0 6.51 5.38 2.56 13.22l7.98 6.19C12.43 13.72 17.74 9.5 24 9.5z"/><path fill="#4e82ec" d="M46.98 24.55c0-1.57-.15-3.09-.38-4.55H24v9.02h12.94c-.58 2.960-2.26 5.480-4.780 7.180l7.73 6c4.510-4.180 7.090-10.360 7.090-17.650z"/><path fill="#f1b82d" d="M10.53 28.59c-.48-1.45-.76-2.99-.76-4.59s.27-3.14.76-4.59l-7.98-6.19C.92 16.46 0 20.120 0 24c0 3.880.92 7.540 2.560 10.780l7.970-6.190z"/><path fill="#4fa553" d="M24 48c6.48 0 11.93-2.13 15.89-5.81l-7.73-6c-2.15 1.45-4.92 2.3-8.16 2.3-6.26 0-11.57-4.22-13.47-9.91l-7.98 6.19C6.51 42.62 14.62 48 24 48z"/></g><circle cx="297.10" cy="594" r="9.6" fill="#fff"/><g transform="translate(288.30,585.2) scale(0.367)"><path fill="#d94f3d" d="M24 9.5c3.54 0 6.71 1.22 9.21 3.6l6.85-6.85C35.9 2.38 30.47 0 24 0 14.62 0 6.51 5.38 2.56 13.22l7.98 6.19C12.43 13.72 17.74 9.5 24 9.5z"/><path fill="#4e82ec" d="M46.98 24.55c0-1.57-.15-3.09-.38-4.55H24v9.02h12.94c-.58 2.960-2.26 5.480-4.780 7.180l7.73 6c4.510-4.180 7.090-10.360 7.090-17.650z"/><path fill="#f1b82d" d="M10.53 28.59c-.48-1.45-.76-2.99-.76-4.59s.27-3.14.76-4.59l-7.98-6.19C.92 16.46 0 20.120 0 24c0 3.880.92 7.540 2.560 10.780l7.970-6.190z"/><path fill="#4fa553" d="M24 48c6.48 0 11.93-2.13 15.89-5.81l-7.73-6c-2.15 1.45-4.92 2.3-8.16 2.3-6.26 0-11.57-4.22-13.47-9.91l-7.98 6.19C6.51 42.62 14.62 48 24 48z"/></g><circle cx="331.59" cy="594" r="9.6" fill="#fff"/><g transform="translate(322.79,585.2) scale(0.367)"><path fill="#d94f3d" d="M24 9.5c3.54 0 6.71 1.22 9.21 3.6l6.85-6.85C35.9 2.38 30.47 0 24 0 14.62 0 6.51 5.38 2.56 13.22l7.98 6.19C12.43 13.72 17.74 9.5 24 9.5z"/><path fill="#4e82ec" d="M46.98 24.55c0-1.57-.15-3.09-.38-4.55H24v9.02h12.94c-.58 2.960-2.26 5.480-4.780 7.180l7.73 6c4.510-4.180 7.090-10.360 7.090-17.650z"/><path fill="#f1b82d" d="M10.53 28.59c-.48-1.45-.76-2.99-.76-4.59s.27-3.14.76-4.59l-7.98-6.19C.92 16.46 0 20.120 0 24c0 3.880.92 7.540 2.560 10.780l7.970-6.190z"/><path fill="#4fa553" d="M24 48c6.48 0 11.93-2.13 15.89-5.81l-7.73-6c-2.15 1.45-4.92 2.3-8.16 2.3-6.26 0-11.57-4.22-13.47-9.91l-7.98 6.19C6.51 42.62 14.62 48 24 48z"/></g><circle cx="366.08" cy="594" r="9.6" fill="#fff"/><g transform="translate(357.28,585.2) scale(0.367)"><path fill="#d94f3d" d="M24 9.5c3.54 0 6.71 1.22 9.21 3.6l6.85-6.85C35.9 2.38 30.47 0 24 0 14.62 0 6.51 5.38 2.56 13.22l7.98 6.19C12.43 13.72 17.74 9.5 24 9.5z"/><path fill="#4e82ec" d="M46.98 24.55c0-1.57-.15-3.09-.38-4.55H24v9.02h12.94c-.58 2.960-2.26 5.480-4.780 7.180l7.73 6c4.510-4.180 7.090-10.360 7.090-17.650z"/><path fill="#f1b82d" d="M10.53 28.59c-.48-1.45-.76-2.99-.76-4.59s.27-3.14.76-4.59l-7.98-6.19C.92 16.46 0 20.120 0 24c0 3.880.92 7.540 2.560 10.780l7.970-6.190z"/><path fill="#4fa553" d="M24 48c6.48 0 11.93-2.13 15.89-5.81l-7.73-6c-2.15 1.45-4.92 2.3-8.16 2.3-6.26 0-11.57-4.22-13.47-9.91l-7.98 6.19C6.51 42.62 14.62 48 24 48z"/></g><circle cx="383.32" cy="594" r="9.6" fill="#fff"/><g transform="translate(374.52,585.2) scale(0.367)"><path fill="#d94f3d" d="M24 9.5c3.54 0 6.71 1.22 9.21 3.6l6.85-6.85C35.9 2.38 30.47 0 24 0 14.62 0 6.51 5.38 2.56 13.22l7.98 6.19C12.43 13.72 17.74 9.5 24 9.5z"/><path fill="#4e82ec" d="M46.98 24.55c0-1.57-.15-3.09-.38-4.55H24v9.02h12.94c-.58 2.960-2.26 5.480-4.780 7.180l7.73 6c4.510-4.180 7.090-10.360 7.090-17.650z"/><path fill="#f1b82d" d="M10.53 28.59c-.48-1.45-.76-2.99-.76-4.59s.27-3.14.76-4.59l-7.98-6.19C.92 16.46 0 20.120 0 24c0 3.880.92 7.540 2.560 10.780l7.970-6.190z"/><path fill="#4fa553" d="M24 48c6.48 0 11.93-2.13 15.89-5.81l-7.73-6c-2.15 1.45-4.92 2.3-8.16 2.3-6.26 0-11.57-4.22-13.47-9.91l-7.98 6.19C6.51 42.62 14.62 48 24 48z"/></g><circle cx="417.81" cy="594" r="9.6" fill="#fff"/><g transform="translate(409.01,585.2) scale(0.367)"><path fill="#d94f3d" d="M24 9.5c3.54 0 6.71 1.22 9.21 3.6l6.85-6.85C35.9 2.38 30.47 0 24 0 14.62 0 6.51 5.38 2.56 13.22l7.98 6.19C12.43 13.72 17.74 9.5 24 9.5z"/><path fill="#4e82ec" d="M46.98 24.55c0-1.57-.15-3.09-.38-4.55H24v9.02h12.94c-.58 2.960-2.26 5.480-4.780 7.180l7.73 6c4.510-4.180 7.090-10.360 7.090-17.650z"/><path fill="#f1b82d" d="M10.53 28.59c-.48-1.45-.76-2.99-.76-4.59s.27-3.14.76-4.59l-7.98-6.19C.92 16.46 0 20.120 0 24c0 3.880.92 7.540 2.560 10.780l7.970-6.190z"/><path fill="#4fa553" d="M24 48c6.48 0 11.93-2.13 15.89-5.81l-7.73-6c-2.15 1.45-4.92 2.3-8.16 2.3-6.26 0-11.57-4.22-13.47-9.91l-7.98 6.19C6.51 42.62 14.62 48 24 48z"/></g><circle cx="486.80" cy="594" r="9.6" fill="#fff"/><g transform="translate(478.00,585.2) scale(0.367)"><path fill="#d94f3d" d="M24 9.5c3.54 0 6.71 1.22 9.21 3.6l6.85-6.85C35.9 2.38 30.47 0 24 0 14.62 0 6.51 5.38 2.56 13.22l7.98 6.19C12.43 13.72 17.74 9.5 24 9.5z"/><path fill="#4e82ec" d="M46.98 24.55c0-1.57-.15-3.09-.38-4.55H24v9.02h12.94c-.58 2.960-2.26 5.480-4.780 7.180l7.73 6c4.510-4.180 7.090-10.360 7.090-17.650z"/><path fill="#f1b82d" d="M10.53 28.59c-.48-1.45-.76-2.99-.76-4.59s.27-3.14.76-4.59l-7.98-6.19C.92 16.46 0 20.120 0 24c0 3.880.92 7.540 2.560 10.780l7.970-6.190z"/><path fill="#4fa553" d="M24 48c6.48 0 11.93-2.13 15.89-5.81l-7.73-6c-2.15 1.45-4.92 2.3-8.16 2.3-6.26 0-11.57-4.22-13.47-9.91l-7.98 6.19C6.51 42.62 14.62 48 24 48z"/></g><circle cx="504.04" cy="594" r="9.6" fill="#fff"/><g transform="translate(495.24,585.2) scale(0.367)"><path fill="#d94f3d" d="M24 9.5c3.54 0 6.71 1.22 9.21 3.6l6.85-6.85C35.9 2.38 30.47 0 24 0 14.62 0 6.51 5.38 2.56 13.22l7.98 6.19C12.43 13.72 17.74 9.5 24 9.5z"/><path fill="#4e82ec" d="M46.98 24.55c0-1.57-.15-3.09-.38-4.55H24v9.02h12.94c-.58 2.960-2.26 5.480-4.780 7.180l7.73 6c4.510-4.180 7.090-10.360 7.090-17.650z"/><path fill="#f1b82d" d="M10.53 28.59c-.48-1.45-.76-2.99-.76-4.59s.27-3.14.76-4.59l-7.98-6.19C.92 16.46 0 20.120 0 24c0 3.880.92 7.540 2.560 10.780l7.970-6.190z"/><path fill="#4fa553" d="M24 48c6.48 0 11.93-2.13 15.89-5.81l-7.73-6c-2.15 1.45-4.92 2.3-8.16 2.3-6.26 0-11.57-4.22-13.47-9.91l-7.98 6.19C6.51 42.62 14.62 48 24 48z"/></g><circle cx="538.53" cy="594" r="9.6" fill="#fff"/><g transform="translate(529.73,585.2) scale(0.367)"><path fill="#d94f3d" d="M24 9.5c3.54 0 6.71 1.22 9.21 3.6l6.85-6.85C35.9 2.38 30.47 0 24 0 14.62 0 6.51 5.38 2.56 13.22l7.98 6.19C12.43 13.72 17.74 9.5 24 9.5z"/><path fill="#4e82ec" d="M46.98 24.55c0-1.57-.15-3.09-.38-4.55H24v9.02h12.94c-.58 2.960-2.26 5.480-4.780 7.180l7.73 6c4.510-4.180 7.090-10.360 7.090-17.650z"/><path fill="#f1b82d" d="M10.53 28.59c-.48-1.45-.76-2.99-.76-4.59s.27-3.14.76-4.59l-7.98-6.19C.92 16.46 0 20.120 0 24c0 3.880.92 7.540 2.560 10.780l7.970-6.190z"/><path fill="#4fa553" d="M24 48c6.48 0 11.93-2.13 15.89-5.81l-7.73-6c-2.15 1.45-4.92 2.3-8.16 2.3-6.26 0-11.57-4.22-13.47-9.91l-7.98 6.19C6.51 42.62 14.62 48 24 48z"/></g><circle cx="555.77" cy="594" r="9.6" fill="#fff"/><g transform="translate(546.98,585.2) scale(0.367)"><path fill="#d94f3d" d="M24 9.5c3.54 0 6.71 1.22 9.21 3.6l6.85-6.85C35.9 2.38 30.47 0 24 0 14.62 0 6.51 5.38 2.56 13.22l7.98 6.19C12.43 13.72 17.74 9.5 24 9.5z"/><path fill="#4e82ec" d="M46.98 24.55c0-1.57-.15-3.09-.38-4.55H24v9.02h12.94c-.58 2.960-2.26 5.480-4.780 7.180l7.73 6c4.510-4.180 7.090-10.360 7.090-17.650z"/><path fill="#f1b82d" d="M10.53 28.59c-.48-1.45-.76-2.99-.76-4.59s.27-3.14.76-4.59l-7.98-6.19C.92 16.46 0 20.120 0 24c0 3.880.92 7.540 2.560 10.780l7.970-6.190z"/><path fill="#4fa553" d="M24 48c6.48 0 11.93-2.13 15.89-5.81l-7.73-6c-2.15 1.45-4.92 2.3-8.16 2.3-6.26 0-11.57-4.22-13.47-9.91l-7.98 6.19C6.51 42.62 14.62 48 24 48z"/></g><circle cx="573.02" cy="594" r="9.6" fill="#fff"/><g transform="translate(564.22,585.2) scale(0.367)"><path fill="#d94f3d" d="M24 9.5c3.54 0 6.71 1.22 9.21 3.6l6.85-6.85C35.9 2.38 30.47 0 24 0 14.62 0 6.51 5.38 2.56 13.22l7.98 6.19C12.43 13.72 17.74 9.5 24 9.5z"/><path fill="#4e82ec" d="M46.98 24.55c0-1.57-.15-3.09-.38-4.55H24v9.02h12.94c-.58 2.960-2.26 5.480-4.780 7.180l7.73 6c4.510-4.180 7.090-10.360 7.090-17.650z"/><path fill="#f1b82d" d="M10.53 28.59c-.48-1.45-.76-2.99-.76-4.59s.27-3.14.76-4.59l-7.98-6.19C.92 16.46 0 20.120 0 24c0 3.880.92 7.540 2.560 10.780l7.970-6.190z"/><path fill="#4fa553" d="M24 48c6.48 0 11.93-2.13 15.89-5.81l-7.73-6c-2.15 1.45-4.92 2.3-8.16 2.3-6.26 0-11.57-4.22-13.47-9.91l-7.98 6.19C6.51 42.62 14.62 48 24 48z"/></g><circle cx="590.26" cy="594" r="9.6" fill="#fff"/><g transform="translate(581.47,585.2) scale(0.367)"><path fill="#d94f3d" d="M24 9.5c3.54 0 6.71 1.22 9.21 3.6l6.85-6.85C35.9 2.38 30.47 0 24 0 14.62 0 6.51 5.38 2.56 13.22l7.98 6.19C12.43 13.72 17.74 9.5 24 9.5z"/><path fill="#4e82ec" d="M46.98 24.55c0-1.57-.15-3.09-.38-4.55H24v9.02h12.94c-.58 2.960-2.26 5.480-4.780 7.180l7.73 6c4.510-4.180 7.090-10.360 7.090-17.650z"/><path fill="#f1b82d" d="M10.53 28.59c-.48-1.45-.76-2.99-.76-4.59s.27-3.14.76-4.59l-7.98-6.19C.92 16.46 0 20.120 0 24c0 3.880.92 7.540 2.560 10.780l7.970-6.190z"/><path fill="#4fa553" d="M24 48c6.48 0 11.93-2.13 15.89-5.81l-7.73-6c-2.15 1.45-4.92 2.3-8.16 2.3-6.26 0-11.57-4.22-13.47-9.91l-7.98 6.19C6.51 42.62 14.62 48 24 48z"/></g><circle cx="624.75" cy="594" r="9.6" fill="#fff"/><g transform="translate(615.96,585.2) scale(0.367)"><path fill="#d94f3d" d="M24 9.5c3.54 0 6.71 1.22 9.21 3.6l6.85-6.85C35.9 2.38 30.47 0 24 0 14.62 0 6.51 5.38 2.56 13.22l7.98 6.19C12.43 13.72 17.74 9.5 24 9.5z"/><path fill="#4e82ec" d="M46.98 24.55c0-1.57-.15-3.09-.38-4.55H24v9.02h12.94c-.58 2.960-2.26 5.480-4.780 7.180l7.73 6c4.510-4.180 7.090-10.360 7.090-17.650z"/><path fill="#f1b82d" d="M10.53 28.59c-.48-1.45-.76-2.99-.76-4.59s.27-3.14.76-4.59l-7.98-6.19C.92 16.46 0 20.120 0 24c0 3.880.92 7.540 2.560 10.780l7.970-6.190z"/><path fill="#4fa553" d="M24 48c6.48 0 11.93-2.13 15.89-5.81l-7.73-6c-2.15 1.45-4.92 2.3-8.16 2.3-6.26 0-11.57-4.22-13.47-9.91l-7.98 6.19C6.51 42.62 14.62 48 24 48z"/></g><circle cx="642.00" cy="594" r="9.6" fill="#fff"/><g transform="translate(633.20,585.2) scale(0.367)"><path fill="#d94f3d" d="M24 9.5c3.54 0 6.71 1.22 9.21 3.6l6.85-6.85C35.9 2.38 30.47 0 24 0 14.62 0 6.51 5.38 2.56 13.22l7.98 6.19C12.43 13.72 17.74 9.5 24 9.5z"/><path fill="#4e82ec" d="M46.98 24.55c0-1.57-.15-3.09-.38-4.55H24v9.02h12.94c-.58 2.960-2.26 5.480-4.780 7.180l7.73 6c4.510-4.180 7.090-10.360 7.090-17.650z"/><path fill="#f1b82d" d="M10.53 28.59c-.48-1.45-.76-2.99-.76-4.59s.27-3.14.76-4.59l-7.98-6.19C.92 16.46 0 20.120 0 24c0 3.880.92 7.540 2.560 10.780l7.970-6.190z"/><path fill="#4fa553" d="M24 48c6.48 0 11.93-2.13 15.89-5.81l-7.73-6c-2.15 1.45-4.92 2.3-8.16 2.3-6.26 0-11.57-4.22-13.47-9.91l-7.98 6.19C6.51 42.62 14.62 48 24 48z"/></g><circle cx="693.74" cy="594" r="9.6" fill="#fff"/><g transform="translate(684.94,585.2) scale(0.367)"><path fill="#d94f3d" d="M24 9.5c3.54 0 6.71 1.22 9.21 3.6l6.85-6.85C35.9 2.38 30.47 0 24 0 14.62 0 6.51 5.38 2.56 13.22l7.98 6.19C12.43 13.72 17.74 9.5 24 9.5z"/><path fill="#4e82ec" d="M46.98 24.55c0-1.57-.15-3.09-.38-4.55H24v9.02h12.94c-.58 2.960-2.26 5.480-4.780 7.180l7.73 6c4.510-4.180 7.090-10.360 7.090-17.650z"/><path fill="#f1b82d" d="M10.53 28.59c-.48-1.45-.76-2.99-.76-4.59s.27-3.14.76-4.59l-7.98-6.19C.92 16.46 0 20.120 0 24c0 3.880.92 7.540 2.560 10.780l7.970-6.190z"/><path fill="#4fa553" d="M24 48c6.48 0 11.93-2.13 15.89-5.81l-7.73-6c-2.15 1.45-4.92 2.3-8.16 2.3-6.26 0-11.57-4.22-13.47-9.91l-7.98 6.19C6.51 42.62 14.62 48 24 48z"/></g><circle cx="728.23" cy="594" r="9.6" fill="#fff"/><g transform="translate(719.43,585.2) scale(0.367)"><path fill="#d94f3d" d="M24 9.5c3.54 0 6.71 1.22 9.21 3.6l6.85-6.85C35.9 2.38 30.47 0 24 0 14.62 0 6.51 5.38 2.56 13.22l7.98 6.19C12.43 13.72 17.74 9.5 24 9.5z"/><path fill="#4e82ec" d="M46.98 24.55c0-1.57-.15-3.09-.38-4.55H24v9.02h12.94c-.58 2.960-2.26 5.480-4.780 7.180l7.73 6c4.510-4.180 7.090-10.360 7.090-17.650z"/><path fill="#f1b82d" d="M10.53 28.59c-.48-1.45-.76-2.99-.76-4.59s.27-3.14.76-4.59l-7.98-6.19C.92 16.46 0 20.120 0 24c0 3.880.92 7.540 2.560 10.780l7.970-6.190z"/><path fill="#4fa553" d="M24 48c6.48 0 11.93-2.13 15.89-5.81l-7.73-6c-2.15 1.45-4.92 2.3-8.16 2.3-6.26 0-11.57-4.22-13.47-9.91l-7.98 6.19C6.51 42.62 14.62 48 24 48z"/></g><circle cx="745.47" cy="594" r="9.6" fill="#fff"/><g transform="translate(736.67,585.2) scale(0.367)"><path fill="#d94f3d" d="M24 9.5c3.54 0 6.71 1.22 9.21 3.6l6.85-6.85C35.9 2.38 30.47 0 24 0 14.62 0 6.51 5.38 2.56 13.22l7.98 6.19C12.43 13.72 17.74 9.5 24 9.5z"/><path fill="#4e82ec" d="M46.98 24.55c0-1.57-.15-3.09-.38-4.55H24v9.02h12.94c-.58 2.960-2.26 5.480-4.780 7.180l7.73 6c4.510-4.180 7.090-10.360 7.090-17.650z"/><path fill="#f1b82d" d="M10.53 28.59c-.48-1.45-.76-2.99-.76-4.59s.27-3.14.76-4.59l-7.98-6.19C.92 16.46 0 20.120 0 24c0 3.880.92 7.540 2.560 10.780l7.970-6.190z"/><path fill="#4fa553" d="M24 48c6.48 0 11.93-2.13 15.89-5.81l-7.73-6c-2.15 1.45-4.92 2.3-8.16 2.3-6.26 0-11.57-4.22-13.47-9.91l-7.98 6.19C6.51 42.62 14.62 48 24 48z"/></g><circle cx="762.72" cy="594" r="9.6" fill="#fff"/><g transform="translate(753.92,585.2) scale(0.367)"><path fill="#d94f3d" d="M24 9.5c3.54 0 6.71 1.22 9.21 3.6l6.85-6.85C35.9 2.38 30.47 0 24 0 14.62 0 6.51 5.38 2.56 13.22l7.98 6.19C12.43 13.72 17.74 9.5 24 9.5z"/><path fill="#4e82ec" d="M46.98 24.55c0-1.57-.15-3.09-.38-4.55H24v9.02h12.94c-.58 2.960-2.26 5.480-4.780 7.180l7.73 6c4.510-4.180 7.090-10.360 7.090-17.650z"/><path fill="#f1b82d" d="M10.53 28.59c-.48-1.45-.76-2.99-.76-4.59s.27-3.14.76-4.59l-7.98-6.19C.92 16.46 0 20.120 0 24c0 3.880.92 7.540 2.560 10.780l7.970-6.190z"/><path fill="#4fa553" d="M24 48c6.48 0 11.93-2.13 15.89-5.81l-7.73-6c-2.15 1.45-4.92 2.3-8.16 2.3-6.26 0-11.57-4.22-13.47-9.91l-7.98 6.19C6.51 42.62 14.62 48 24 48z"/></g><circle cx="831.70" cy="594" r="9.6" fill="#fff"/><g transform="translate(822.90,585.2) scale(0.367)"><path fill="#d94f3d" d="M24 9.5c3.54 0 6.71 1.22 9.21 3.6l6.85-6.85C35.9 2.38 30.47 0 24 0 14.62 0 6.51 5.38 2.56 13.22l7.98 6.19C12.43 13.72 17.74 9.5 24 9.5z"/><path fill="#4e82ec" d="M46.98 24.55c0-1.57-.15-3.09-.38-4.55H24v9.02h12.94c-.58 2.960-2.26 5.480-4.780 7.180l7.73 6c4.510-4.180 7.090-10.360 7.090-17.650z"/><path fill="#f1b82d" d="M10.53 28.59c-.48-1.45-.76-2.99-.76-4.59s.27-3.14.76-4.59l-7.98-6.19C.92 16.46 0 20.120 0 24c0 3.880.92 7.540 2.560 10.780l7.970-6.190z"/><path fill="#4fa553" d="M24 48c6.48 0 11.93-2.13 15.89-5.81l-7.73-6c-2.15 1.45-4.92 2.3-8.16 2.3-6.26 0-11.57-4.22-13.47-9.91l-7.98 6.19C6.51 42.62 14.62 48 24 48z"/></g><circle cx="883.43" cy="594" r="9.6" fill="#fff"/><g transform="translate(874.63,585.2) scale(0.367)"><path fill="#d94f3d" d="M24 9.5c3.54 0 6.71 1.22 9.21 3.6l6.85-6.85C35.9 2.38 30.47 0 24 0 14.62 0 6.51 5.38 2.56 13.22l7.98 6.19C12.43 13.72 17.74 9.5 24 9.5z"/><path fill="#4e82ec" d="M46.98 24.55c0-1.57-.15-3.09-.38-4.55H24v9.02h12.94c-.58 2.960-2.26 5.480-4.780 7.180l7.73 6c4.510-4.180 7.090-10.360 7.090-17.650z"/><path fill="#f1b82d" d="M10.53 28.59c-.48-1.45-.76-2.99-.76-4.59s.27-3.14.76-4.59l-7.98-6.19C.92 16.46 0 20.120 0 24c0 3.880.92 7.540 2.560 10.780l7.970-6.190z"/><path fill="#4fa553" d="M24 48c6.48 0 11.93-2.13 15.89-5.81l-7.73-6c-2.15 1.45-4.92 2.3-8.16 2.3-6.26 0-11.57-4.22-13.47-9.91l-7.98 6.19C6.51 42.62 14.62 48 24 48z"/></g><circle cx="900.68" cy="594" r="9.6" fill="#fff"/><g transform="translate(891.88,585.2) scale(0.367)"><path fill="#d94f3d" d="M24 9.5c3.54 0 6.71 1.22 9.21 3.6l6.85-6.85C35.9 2.38 30.47 0 24 0 14.62 0 6.51 5.38 2.56 13.22l7.98 6.19C12.43 13.72 17.74 9.5 24 9.5z"/><path fill="#4e82ec" d="M46.98 24.55c0-1.57-.15-3.09-.38-4.55H24v9.02h12.94c-.58 2.960-2.26 5.480-4.780 7.180l7.73 6c4.510-4.180 7.090-10.360 7.090-17.650z"/><path fill="#f1b82d" d="M10.53 28.59c-.48-1.45-.76-2.99-.76-4.59s.27-3.14.76-4.59l-7.98-6.19C.92 16.46 0 20.120 0 24c0 3.880.92 7.540 2.560 10.780l7.970-6.190z"/><path fill="#4fa553" d="M24 48c6.48 0 11.93-2.13 15.89-5.81l-7.73-6c-2.15 1.45-4.92 2.3-8.16 2.3-6.26 0-11.57-4.22-13.47-9.91l-7.98 6.19C6.51 42.62 14.62 48 24 48z"/></g><circle cx="952.41" cy="594" r="9.6" fill="#fff"/><g transform="translate(943.61,585.2) scale(0.367)"><path fill="#d94f3d" d="M24 9.5c3.54 0 6.71 1.22 9.21 3.6l6.85-6.85C35.9 2.38 30.47 0 24 0 14.62 0 6.51 5.38 2.56 13.22l7.98 6.19C12.43 13.72 17.74 9.5 24 9.5z"/><path fill="#4e82ec" d="M46.98 24.55c0-1.57-.15-3.09-.38-4.55H24v9.02h12.94c-.58 2.960-2.26 5.480-4.780 7.180l7.73 6c4.510-4.180 7.090-10.360 7.090-17.650z"/><path fill="#f1b82d" d="M10.53 28.59c-.48-1.45-.76-2.99-.76-4.59s.27-3.14.76-4.59l-7.98-6.19C.92 16.46 0 20.120 0 24c0 3.880.92 7.540 2.560 10.780l7.970-6.190z"/><path fill="#4fa553" d="M24 48c6.48 0 11.93-2.13 15.89-5.81l-7.73-6c-2.15 1.45-4.92 2.3-8.16 2.3-6.26 0-11.57-4.22-13.47-9.91l-7.98 6.19C6.51 42.62 14.62 48 24 48z"/></g><circle cx="986.90" cy="594" r="9.6" fill="#fff"/><g transform="translate(978.10,585.2) scale(0.367)"><path fill="#d94f3d" d="M24 9.5c3.54 0 6.71 1.22 9.21 3.6l6.85-6.85C35.9 2.38 30.47 0 24 0 14.62 0 6.51 5.38 2.56 13.22l7.98 6.19C12.43 13.72 17.74 9.5 24 9.5z"/><path fill="#4e82ec" d="M46.98 24.55c0-1.57-.15-3.09-.38-4.55H24v9.02h12.94c-.58 2.960-2.26 5.480-4.780 7.180l7.73 6c4.510-4.180 7.090-10.360 7.090-17.650z"/><path fill="#f1b82d" d="M10.53 28.59c-.48-1.45-.76-2.99-.76-4.59s.27-3.14.76-4.59l-7.98-6.19C.92 16.46 0 20.120 0 24c0 3.880.92 7.540 2.560 10.780l7.970-6.190z"/><path fill="#4fa553" d="M24 48c6.48 0 11.93-2.13 15.89-5.81l-7.73-6c-2.15 1.45-4.92 2.3-8.16 2.3-6.26 0-11.57-4.22-13.47-9.91l-7.98 6.19C6.51 42.62 14.62 48 24 48z"/></g><circle cx="1021.39" cy="594" r="9.6" fill="#fff"/><g transform="translate(1012.59,585.2) scale(0.367)"><path fill="#d94f3d" d="M24 9.5c3.54 0 6.71 1.22 9.21 3.6l6.85-6.85C35.9 2.38 30.47 0 24 0 14.62 0 6.51 5.38 2.56 13.22l7.98 6.19C12.43 13.72 17.74 9.5 24 9.5z"/><path fill="#4e82ec" d="M46.98 24.55c0-1.57-.15-3.09-.38-4.55H24v9.02h12.94c-.58 2.960-2.26 5.480-4.780 7.180l7.73 6c4.510-4.180 7.090-10.360 7.090-17.650z"/><path fill="#f1b82d" d="M10.53 28.59c-.48-1.45-.76-2.99-.76-4.59s.27-3.14.76-4.59l-7.98-6.19C.92 16.46 0 20.120 0 24c0 3.880.92 7.540 2.560 10.780l7.970-6.190z"/><path fill="#4fa553" d="M24 48c6.48 0 11.93-2.13 15.89-5.81l-7.73-6c-2.15 1.45-4.92 2.3-8.16 2.3-6.26 0-11.57-4.22-13.47-9.91l-7.98 6.19C6.51 42.62 14.62 48 24 48z"/></g><circle cx="1038.64" cy="594" r="9.6" fill="#fff"/><g transform="translate(1029.84,585.2) scale(0.367)"><path fill="#d94f3d" d="M24 9.5c3.54 0 6.71 1.22 9.21 3.6l6.85-6.85C35.9 2.38 30.47 0 24 0 14.62 0 6.51 5.38 2.56 13.22l7.98 6.19C12.43 13.72 17.74 9.5 24 9.5z"/><path fill="#4e82ec" d="M46.98 24.55c0-1.57-.15-3.09-.38-4.55H24v9.02h12.94c-.58 2.960-2.26 5.480-4.780 7.180l7.73 6c4.510-4.180 7.090-10.360 7.090-17.650z"/><path fill="#f1b82d" d="M10.53 28.59c-.48-1.45-.76-2.99-.76-4.59s.27-3.14.76-4.59l-7.98-6.19C.92 16.46 0 20.120 0 24c0 3.880.92 7.540 2.560 10.780l7.970-6.190z"/><path fill="#4fa553" d="M24 48c6.48 0 11.93-2.13 15.89-5.81l-7.73-6c-2.15 1.45-4.92 2.3-8.16 2.3-6.26 0-11.57-4.22-13.47-9.91l-7.98 6.19C6.51 42.62 14.62 48 24 48z"/></g><circle cx="1055.88" cy="594" r="9.6" fill="#fff"/><g transform="translate(1047.08,585.2) scale(0.367)"><path fill="#d94f3d" d="M24 9.5c3.54 0 6.71 1.22 9.21 3.6l6.85-6.85C35.9 2.38 30.47 0 24 0 14.62 0 6.51 5.38 2.56 13.22l7.98 6.19C12.43 13.72 17.74 9.5 24 9.5z"/><path fill="#4e82ec" d="M46.98 24.55c0-1.57-.15-3.09-.38-4.55H24v9.02h12.94c-.58 2.960-2.26 5.480-4.780 7.180l7.73 6c4.510-4.180 7.090-10.360 7.090-17.650z"/><path fill="#f1b82d" d="M10.53 28.59c-.48-1.45-.76-2.99-.76-4.59s.27-3.14.76-4.59l-7.98-6.19C.92 16.46 0 20.120 0 24c0 3.880.92 7.540 2.560 10.780l7.970-6.190z"/><path fill="#4fa553" d="M24 48c6.48 0 11.93-2.13 15.89-5.81l-7.73-6c-2.15 1.45-4.92 2.3-8.16 2.3-6.26 0-11.57-4.22-13.47-9.91l-7.98 6.19C6.51 42.62 14.62 48 24 48z"/></g><circle cx="1073.12" cy="594" r="9.6" fill="#fff"/><g transform="translate(1064.33,585.2) scale(0.367)"><path fill="#d94f3d" d="M24 9.5c3.54 0 6.71 1.22 9.21 3.6l6.85-6.85C35.9 2.38 30.47 0 24 0 14.62 0 6.51 5.38 2.56 13.22l7.98 6.19C12.43 13.72 17.74 9.5 24 9.5z"/><path fill="#4e82ec" d="M46.98 24.55c0-1.57-.15-3.09-.38-4.55H24v9.02h12.94c-.58 2.960-2.26 5.480-4.780 7.180l7.73 6c4.510-4.180 7.090-10.360 7.090-17.650z"/><path fill="#f1b82d" d="M10.53 28.59c-.48-1.45-.76-2.99-.76-4.59s.27-3.14.76-4.59l-7.98-6.19C.92 16.46 0 20.120 0 24c0 3.880.92 7.540 2.560 10.780l7.970-6.190z"/><path fill="#4fa553" d="M24 48c6.48 0 11.93-2.13 15.89-5.81l-7.73-6c-2.15 1.45-4.92 2.3-8.16 2.3-6.26 0-11.57-4.22-13.47-9.91l-7.98 6.19C6.51 42.62 14.62 48 24 48z"/></g><circle cx="1090.37" cy="594" r="9.6" fill="#fff"/><g transform="translate(1081.57,585.2) scale(0.367)"><path fill="#d94f3d" d="M24 9.5c3.54 0 6.71 1.22 9.21 3.6l6.85-6.85C35.9 2.38 30.47 0 24 0 14.62 0 6.51 5.38 2.56 13.22l7.98 6.19C12.43 13.72 17.74 9.5 24 9.5z"/><path fill="#4e82ec" d="M46.98 24.55c0-1.57-.15-3.09-.38-4.55H24v9.02h12.94c-.58 2.960-2.26 5.480-4.780 7.180l7.73 6c4.510-4.180 7.090-10.360 7.090-17.650z"/><path fill="#f1b82d" d="M10.53 28.59c-.48-1.45-.76-2.99-.76-4.59s.27-3.14.76-4.59l-7.98-6.19C.92 16.46 0 20.120 0 24c0 3.880.92 7.540 2.560 10.780l7.970-6.190z"/><path fill="#4fa553" d="M24 48c6.48 0 11.93-2.13 15.89-5.81l-7.73-6c-2.15 1.45-4.92 2.3-8.16 2.3-6.26 0-11.57-4.22-13.47-9.91l-7.98 6.19C6.51 42.62 14.62 48 24 48z"/></g><circle cx="1107.62" cy="594" r="9.6" fill="#fff"/><g transform="translate(1098.82,585.2) scale(0.367)"><path fill="#d94f3d" d="M24 9.5c3.54 0 6.71 1.22 9.21 3.6l6.85-6.85C35.9 2.38 30.47 0 24 0 14.62 0 6.51 5.38 2.56 13.22l7.98 6.19C12.43 13.72 17.74 9.5 24 9.5z"/><path fill="#4e82ec" d="M46.98 24.55c0-1.57-.15-3.09-.38-4.55H24v9.02h12.94c-.58 2.960-2.26 5.480-4.780 7.180l7.73 6c4.510-4.180 7.090-10.360 7.090-17.650z"/><path fill="#f1b82d" d="M10.53 28.59c-.48-1.45-.76-2.99-.76-4.59s.27-3.14.76-4.59l-7.98-6.19C.92 16.46 0 20.120 0 24c0 3.880.92 7.540 2.560 10.780l7.970-6.190z"/><path fill="#4fa553" d="M24 48c6.48 0 11.93-2.13 15.89-5.81l-7.73-6c-2.15 1.45-4.92 2.3-8.16 2.3-6.26 0-11.57-4.22-13.47-9.91l-7.98 6.19C6.51 42.62 14.62 48 24 48z"/></g><circle cx="1124.86" cy="594" r="9.6" fill="#fff"/><g transform="translate(1116.06,585.2) scale(0.367)"><path fill="#d94f3d" d="M24 9.5c3.54 0 6.71 1.22 9.21 3.6l6.85-6.85C35.9 2.38 30.47 0 24 0 14.62 0 6.51 5.38 2.56 13.22l7.98 6.19C12.43 13.72 17.74 9.5 24 9.5z"/><path fill="#4e82ec" d="M46.98 24.55c0-1.57-.15-3.09-.38-4.55H24v9.02h12.94c-.58 2.960-2.26 5.480-4.780 7.180l7.73 6c4.510-4.180 7.090-10.360 7.090-17.650z"/><path fill="#f1b82d" d="M10.53 28.59c-.48-1.45-.76-2.99-.76-4.59s.27-3.14.76-4.59l-7.98-6.19C.92 16.46 0 20.120 0 24c0 3.880.92 7.540 2.560 10.780l7.970-6.190z"/><path fill="#4fa553" d="M24 48c6.48 0 11.93-2.13 15.89-5.81l-7.73-6c-2.15 1.45-4.92 2.3-8.16 2.3-6.26 0-11.57-4.22-13.47-9.91l-7.98 6.19C6.51 42.62 14.62 48 24 48z"/></g><circle cx="1159.35" cy="594" r="9.6" fill="#fff"/><g transform="translate(1150.55,585.2) scale(0.367)"><path fill="#d94f3d" d="M24 9.5c3.54 0 6.71 1.22 9.21 3.6l6.85-6.85C35.9 2.38 30.47 0 24 0 14.62 0 6.51 5.38 2.56 13.22l7.98 6.19C12.43 13.72 17.74 9.5 24 9.5z"/><path fill="#4e82ec" d="M46.98 24.55c0-1.57-.15-3.09-.38-4.55H24v9.02h12.94c-.58 2.960-2.26 5.480-4.780 7.180l7.73 6c4.510-4.180 7.090-10.360 7.090-17.650z"/><path fill="#f1b82d" d="M10.53 28.59c-.48-1.45-.76-2.99-.76-4.59s.27-3.14.76-4.59l-7.98-6.19C.92 16.46 0 20.120 0 24c0 3.880.92 7.540 2.560 10.780l7.970-6.190z"/><path fill="#4fa553" d="M24 48c6.48 0 11.93-2.13 15.89-5.81l-7.73-6c-2.15 1.45-4.92 2.3-8.16 2.3-6.26 0-11.57-4.22-13.47-9.91l-7.98 6.19C6.51 42.62 14.62 48 24 48z"/></g><circle cx="1176.60" cy="594" r="9.6" fill="#fff"/><g transform="translate(1167.80,585.2) scale(0.367)"><path fill="#d94f3d" d="M24 9.5c3.54 0 6.71 1.22 9.21 3.6l6.85-6.85C35.9 2.38 30.47 0 24 0 14.62 0 6.51 5.38 2.56 13.22l7.98 6.19C12.43 13.72 17.74 9.5 24 9.5z"/><path fill="#4e82ec" d="M46.98 24.55c0-1.57-.15-3.09-.38-4.55H24v9.02h12.94c-.58 2.960-2.26 5.480-4.780 7.180l7.73 6c4.510-4.180 7.090-10.360 7.090-17.650z"/><path fill="#f1b82d" d="M10.53 28.59c-.48-1.45-.76-2.99-.76-4.59s.27-3.14.76-4.59l-7.98-6.19C.92 16.46 0 20.120 0 24c0 3.880.92 7.540 2.560 10.780l7.970-6.190z"/><path fill="#4fa553" d="M24 48c6.48 0 11.93-2.13 15.89-5.81l-7.73-6c-2.15 1.45-4.92 2.3-8.16 2.3-6.26 0-11.57-4.22-13.47-9.91l-7.98 6.19C6.51 42.62 14.62 48 24 48z"/></g><circle cx="1211.09" cy="594" r="9.6" fill="#fff"/><g transform="translate(1202.29,585.2) scale(0.367)"><path fill="#d94f3d" d="M24 9.5c3.54 0 6.71 1.22 9.21 3.6l6.85-6.85C35.9 2.38 30.47 0 24 0 14.62 0 6.51 5.38 2.56 13.22l7.98 6.19C12.43 13.72 17.74 9.5 24 9.5z"/><path fill="#4e82ec" d="M46.98 24.55c0-1.57-.15-3.09-.38-4.55H24v9.02h12.94c-.58 2.960-2.26 5.480-4.780 7.180l7.73 6c4.510-4.180 7.090-10.360 7.090-17.650z"/><path fill="#f1b82d" d="M10.53 28.59c-.48-1.45-.76-2.99-.76-4.59s.27-3.14.76-4.59l-7.98-6.19C.92 16.46 0 20.120 0 24c0 3.880.92 7.540 2.560 10.780l7.970-6.190z"/><path fill="#4fa553" d="M24 48c6.48 0 11.93-2.13 15.89-5.81l-7.73-6c-2.15 1.45-4.92 2.3-8.16 2.3-6.26 0-11.57-4.22-13.47-9.91l-7.98 6.19C6.51 42.62 14.62 48 24 48z"/></g><path d="M1133.51,584 H1150.51 V599 H1140.51 L1133.51,603.5 Z" fill="#fff"/><path d="M1134.51,585 H1149.51 V598 H1139.51 L1134.51,602 Z" fill="#db4035"/><path d="M1185.24,584 H1202.24 V599 H1192.24 L1185.24,603.5 Z" fill="#fff"/><path d="M1186.24,585 H1201.24 V598 H1191.24 L1186.24,602 Z" fill="#db4035"/><path d="M1219.73,584 H1236.73 V599 H1226.73 L1219.73,603.5 Z" fill="#fff"/><path d="M1220.73,585 H1235.73 V598 H1225.73 L1220.73,602 Z" fill="#db4035"/><path d="M1236.98,584 H1253.98 V599 H1243.98 L1236.98,603.5 Z" fill="#fff"/><path d="M1237.98,585 H1252.98 V598 H1242.98 L1237.98,602 Z" fill="#db4035"/></svg>
<div class="t" style="right:1160.5px;top:349.45px;font-size:21px;line-height:21px;color:#5f6270;font-weight:400;letter-spacing:0.15px;">300k</div>
<div class="t" style="right:1160.5px;top:426.65px;font-size:21px;line-height:21px;color:#5f6270;font-weight:400;letter-spacing:0.15px;">200k</div>
<div class="t" style="right:1160.5px;top:504.15px;font-size:21px;line-height:21px;color:#5f6270;font-weight:400;letter-spacing:0.15px;">100k</div>
<div class="t" style="right:1160.5px;top:581.75px;font-size:21px;line-height:21px;color:#5f6270;font-weight:400;letter-spacing:0.15px;">0k</div>
<div class="t" style="left:-175.2px;width:600px;text-align:center;top:612.20px;font-size:20px;line-height:20px;color:#5f6270;font-weight:400;letter-spacing:-0.25px;">May 12</div>
<div class="t" style="left:31.74000000000001px;width:600px;text-align:center;top:612.20px;font-size:20px;line-height:20px;color:#5f6270;font-weight:400;letter-spacing:-0.25px;">May 13</div>
<div class="t" style="left:238.67999999999995px;width:600px;text-align:center;top:612.20px;font-size:20px;line-height:20px;color:#5f6270;font-weight:400;letter-spacing:-0.25px;">May 14</div>
<div class="t" style="left:445.6199999999999px;width:600px;text-align:center;top:612.20px;font-size:20px;line-height:20px;color:#5f6270;font-weight:400;letter-spacing:-0.25px;">May 15</div>
<div class="t" style="left:652.56px;width:600px;text-align:center;top:612.20px;font-size:20px;line-height:20px;color:#5f6270;font-weight:400;letter-spacing:-0.25px;">May 16</div>
<div class="t" style="left:859.5px;width:600px;text-align:center;top:612.20px;font-size:20px;line-height:20px;color:#5f6270;font-weight:400;letter-spacing:-0.25px;">May 17</div>
<div class="t" style="left:29.5px;top:715.98px;font-size:26.5px;line-height:26.5px;color:#191b23;font-weight:700;letter-spacing:-0.3px;">Top Keywords</div>
<div class="abs" style="left:0;top:759px;width:1244px;height:1.5px;background:#e2e3e9"></div>
<div class="abs seg" style="left:29px;top:786px;width:444px;height:44px;"></div>
<div class="abs" style="left:183px;top:787px;width:1.3px;height:42px;background:#c4c6cf"></div>
<div class="abs" style="left:292px;top:786px;width:181px;height:44px;box-sizing:border-box;border:1.3px solid #2f6fc9;border-radius:0 6px 6px 0;background:#e9f2fd"></div>
<div class="t" style="left:43.2px;top:798.25px;font-size:23px;line-height:23px;color:#191b23;font-weight:400;letter-spacing:0.3px;">All Positions</div>
<div class="t" style="left:197px;top:798.25px;font-size:23px;line-height:23px;color:#191b23;font-weight:400;letter-spacing:0.4px;">Organic</div>
<div class="t" style="left:305px;top:798.25px;font-size:23px;line-height:23px;color:#191b23;font-weight:400;letter-spacing:-0.3px;">SERP Features</div>
<div class="t" style="left:29px;top:865.67px;font-size:20.5px;line-height:20.5px;color:#191b23;font-weight:400;letter-spacing:0px;">Keyword</div>
<div class="t" style="right:354.5px;top:865.67px;font-size:20.5px;line-height:20.5px;color:#191b23;font-weight:400;letter-spacing:0px;">Position</div>
<div class="t" style="right:280.70000000000005px;top:865.67px;font-size:20.5px;line-height:20.5px;color:#191b23;font-weight:400;letter-spacing:-1.2px;">SF</div>
<div class="t" style="right:171.5px;top:865.67px;font-size:20.5px;line-height:20.5px;color:#191b23;font-weight:400;letter-spacing:-0.3px;">Volume</div>
<div class="t" style="right:63.5px;top:865.67px;font-size:20.5px;line-height:20.5px;color:#191b23;font-weight:400;letter-spacing:-0.1px;">Traffic %</div>
<svg class="abs" style="left:1188px;top:862px" width="26" height="24"><rect x="3" y="4" width="19.5" height="2.6" rx="1.3" fill="#8e909b"/><rect x="3" y="10.5" width="14" height="2.6" rx="1.3" fill="#8e909b"/><rect x="3" y="17" width="8" height="2.6" rx="1.3" fill="#8e909b"/></svg>
<div class="abs" style="left:0;top:900.5px;width:1244px;height:1.5px;background:#a9abb6"></div>
<div class="t" style="left:29px;top:919.85px;font-size:23px;line-height:23px;color:#2b6bc7;letter-spacing:0.5px;white-space:nowrap">boutonniere<svg style="margin-left:9px;vertical-align:-1.5px" width="22" height="18"><path d="M2.5,2 L9,8.6 L2.5,15.2 M11.8,2 L18.3,8.6 L11.8,15.2" fill="none" stroke="#a8aab5" stroke-width="3" stroke-linecap="round" stroke-linejoin="round"/></svg></div>
<svg class="abs" style="left:863px;top:913.6px" width="28" height="28"><path d="M4,3.5 H24 V18.5 H10 L4,23.5 Z" fill="none" stroke="#2c6bc9" stroke-width="3" stroke-linejoin="round"/><text x="14.3" y="15" text-anchor="middle" font-family="Liberation Sans" font-weight="700" font-size="12.5" fill="#2c6bc9">?</text></svg>
<div class="t" style="right:280.5px;top:920.57px;font-size:22.5px;line-height:22.5px;color:#6c6e79;font-weight:400;letter-spacing:0px;">6</div>
<svg class="abs" style="left:948px;top:939.8px" width="18" height="4"><path d="M1.5,1.5 H16" stroke="#6c6e79" stroke-width="1.6" stroke-dasharray="1.7,2.1"/></svg>
<div class="t" style="right:171.5px;top:920.48px;font-size:22.5px;line-height:22.5px;color:#191b23;font-weight:400;letter-spacing:0.2px;">74K</div>
<div class="t" style="right:30.5px;top:920.48px;font-size:22.5px;line-height:22.5px;color:#191b23;font-weight:400;letter-spacing:0.5px;">0.86</div>
<div class="abs" style="left:0;top:961.5px;width:1244px;height:1.5px;background:#e3e4ea"></div>
<div class="t" style="left:29px;top:980.15px;font-size:23px;line-height:23px;color:#2b6bc7;letter-spacing:0.5px;white-space:nowrap">kindness quotes<svg style="margin-left:9px;vertical-align:-1.5px" width="22" height="18"><path d="M2.5,2 L9,8.6 L2.5,15.2 M11.8,2 L18.3,8.6 L11.8,15.2" fill="none" stroke="#a8aab5" stroke-width="3" stroke-linecap="round" stroke-linejoin="round"/></svg></div>
<svg class="abs" style="left:863px;top:973.9px" width="28" height="28"><path d="M4,3.5 H24 V18.5 H10 L4,23.5 Z" fill="none" stroke="#2c6bc9" stroke-width="3" stroke-linejoin="round"/><text x="14.3" y="15" text-anchor="middle" font-family="Liberation Sans" font-weight="700" font-size="12.5" fill="#2c6bc9">?</text></svg>
<div class="t" style="right:280.5px;top:980.87px;font-size:22.5px;line-height:22.5px;color:#6c6e79;font-weight:400;letter-spacing:0px;">6</div>
<svg class="abs" style="left:948px;top:1000.1px" width="18" height="4"><path d="M1.5,1.5 H16" stroke="#6c6e79" stroke-width="1.6" stroke-dasharray="1.7,2.1"/></svg>
<div class="t" style="right:171.5px;top:980.77px;font-size:22.5px;line-height:22.5px;color:#191b23;font-weight:400;letter-spacing:0.2px;">33.1K</div>
<div class="t" style="right:30.5px;top:980.77px;font-size:22.5px;line-height:22.5px;color:#191b23;font-weight:400;letter-spacing:0.5px;">0.62</div>
<div class="abs" style="left:0;top:1021.5px;width:1244px;height:1.5px;background:#e3e4ea"></div>
<div class="t" style="left:29px;top:1040.45px;font-size:23px;line-height:23px;color:#2b6bc7;letter-spacing:0.5px;white-space:nowrap">corsage<svg style="margin-left:9px;vertical-align:-1.5px" width="22" height="18"><path d="M2.5,2 L9,8.6 L2.5,15.2 M11.8,2 L18.3,8.6 L11.8,15.2" fill="none" stroke="#a8aab5" stroke-width="3" stroke-linecap="round" stroke-linejoin="round"/></svg></div>
<svg class="abs" style="left:863px;top:1034.2px" width="28" height="28"><path d="M4,3.5 H24 V18.5 H10 L4,23.5 Z" fill="none" stroke="#2c6bc9" stroke-width="3" stroke-linejoin="round"/><text x="14.3" y="15" text-anchor="middle" font-family="Liberation Sans" font-weight="700" font-size="12.5" fill="#2c6bc9">?</text></svg>
<div class="t" style="right:280.5px;top:1041.17px;font-size:22.5px;line-height:22.5px;color:#6c6e79;font-weight:400;letter-spacing:0px;">7</div>
<svg class="abs" style="left:948px;top:1060.4px" width="18" height="4"><path d="M1.5,1.5 H16" stroke="#6c6e79" stroke-width="1.6" stroke-dasharray="1.7,2.1"/></svg>
<div class="t" style="right:171.5px;top:1041.08px;font-size:22.5px;line-height:22.5px;color:#191b23;font-weight:400;letter-spacing:0.2px;">90.5K</div>
<div class="t" style="right:30.5px;top:1041.08px;font-size:22.5px;line-height:22.5px;color:#191b23;font-weight:400;letter-spacing:0.5px;">0.56</div>
<div class="abs" style="left:0;top:1082.5px;width:1244px;height:1.5px;background:#e3e4ea"></div>
<div class="t" style="left:29px;top:1100.75px;font-size:23px;line-height:23px;color:#2b6bc7;letter-spacing:0.5px;white-space:nowrap">flower shop near me<svg style="margin-left:9px;vertical-align:-1.5px" width="22" height="18"><path d="M2.5,2 L9,8.6 L2.5,15.2 M11.8,2 L18.3,8.6 L11.8,15.2" fill="none" stroke="#a8aab5" stroke-width="3" stroke-linecap="round" stroke-linejoin="round"/></svg></div>
<svg class="abs" style="left:863px;top:1094.5px" width="28" height="28"><path d="M4,3.5 H24 V18.5 H10 L4,23.5 Z" fill="none" stroke="#2c6bc9" stroke-width="3" stroke-linejoin="round"/><text x="14.3" y="15" text-anchor="middle" font-family="Liberation Sans" font-weight="700" font-size="12.5" fill="#2c6bc9">?</text></svg>
<div class="t" style="right:280.5px;top:1101.47px;font-size:22.5px;line-height:22.5px;color:#6c6e79;font-weight:400;letter-spacing:0px;">4</div>
<svg class="abs" style="left:948px;top:1120.7px" width="18" height="4"><path d="M1.5,1.5 H16" stroke="#6c6e79" stroke-width="1.6" stroke-dasharray="1.7,2.1"/></svg>
<div class="t" style="right:171.5px;top:1101.38px;font-size:22.5px;line-height:22.5px;color:#191b23;font-weight:400;letter-spacing:0.2px;">90.5K</div>
<div class="t" style="right:30.5px;top:1101.38px;font-size:22.5px;line-height:22.5px;color:#191b23;font-weight:400;letter-spacing:0.5px;">0.56</div>
<div class="abs" style="left:0;top:1142.5px;width:1244px;height:1.5px;background:#e3e4ea"></div>
<div class="t" style="left:29px;top:1161.05px;font-size:23px;line-height:23px;color:#2b6bc7;letter-spacing:0.5px;white-space:nowrap">red roses<svg style="margin-left:9px;vertical-align:-1.5px" width="22" height="18"><path d="M2.5,2 L9,8.6 L2.5,15.2 M11.8,2 L18.3,8.6 L11.8,15.2" fill="none" stroke="#a8aab5" stroke-width="3" stroke-linecap="round" stroke-linejoin="round"/></svg></div>
<svg class="abs" style="left:863px;top:1154.8px" width="28" height="28"><path d="M4,3.5 H24 V18.5 H10 L4,23.5 Z" fill="none" stroke="#2c6bc9" stroke-width="3" stroke-linejoin="round"/><text x="14.3" y="15" text-anchor="middle" font-family="Liberation Sans" font-weight="700" font-size="12.5" fill="#2c6bc9">?</text></svg>
<div class="t" style="right:280.5px;top:1161.77px;font-size:22.5px;line-height:22.5px;color:#6c6e79;font-weight:400;letter-spacing:0px;">7</div>
<svg class="abs" style="left:948px;top:1181.0px" width="18" height="4"><path d="M1.5,1.5 H16" stroke="#6c6e79" stroke-width="1.6" stroke-dasharray="1.7,2.1"/></svg>
<div class="t" style="right:171.5px;top:1161.67px;font-size:22.5px;line-height:22.5px;color:#191b23;font-weight:400;letter-spacing:0.2px;">27.1K</div>
<div class="t" style="right:30.5px;top:1161.67px;font-size:22.5px;line-height:22.5px;color:#191b23;font-weight:400;letter-spacing:0.5px;">0.31</div>
<div class="abs" style="left:0;top:1202.5px;width:1244px;height:1.5px;background:#e3e4ea"></div>
<div class="abs btn" style="left:29px;top:1236px;width:274px;height:45px;"></div>
<div class="t" style="left:43px;top:1248.67px;font-size:22.5px;line-height:22.5px;color:#fff;font-weight:700;letter-spacing:0.05px;">View all 8.2K keywords</div>
<svg class="abs" style="left:0;top:0;filter:drop-shadow(0 1px 1.5px rgba(0,0,0,0.25))" width="1244" height="900"><path d="M613,707.3 C655,707.5 690,712 684.5,725 C676,744 560,775 474,795.5" fill="none" stroke="#a98cf6" stroke-width="3.8" stroke-linecap="round"/><path d="M461,798.8 L477.5,783.8 L483.2,804.5 Z" fill="#a98cf6" stroke="#a98cf6" stroke-width="1" stroke-linejoin="round"/></svg>
</body></html>
